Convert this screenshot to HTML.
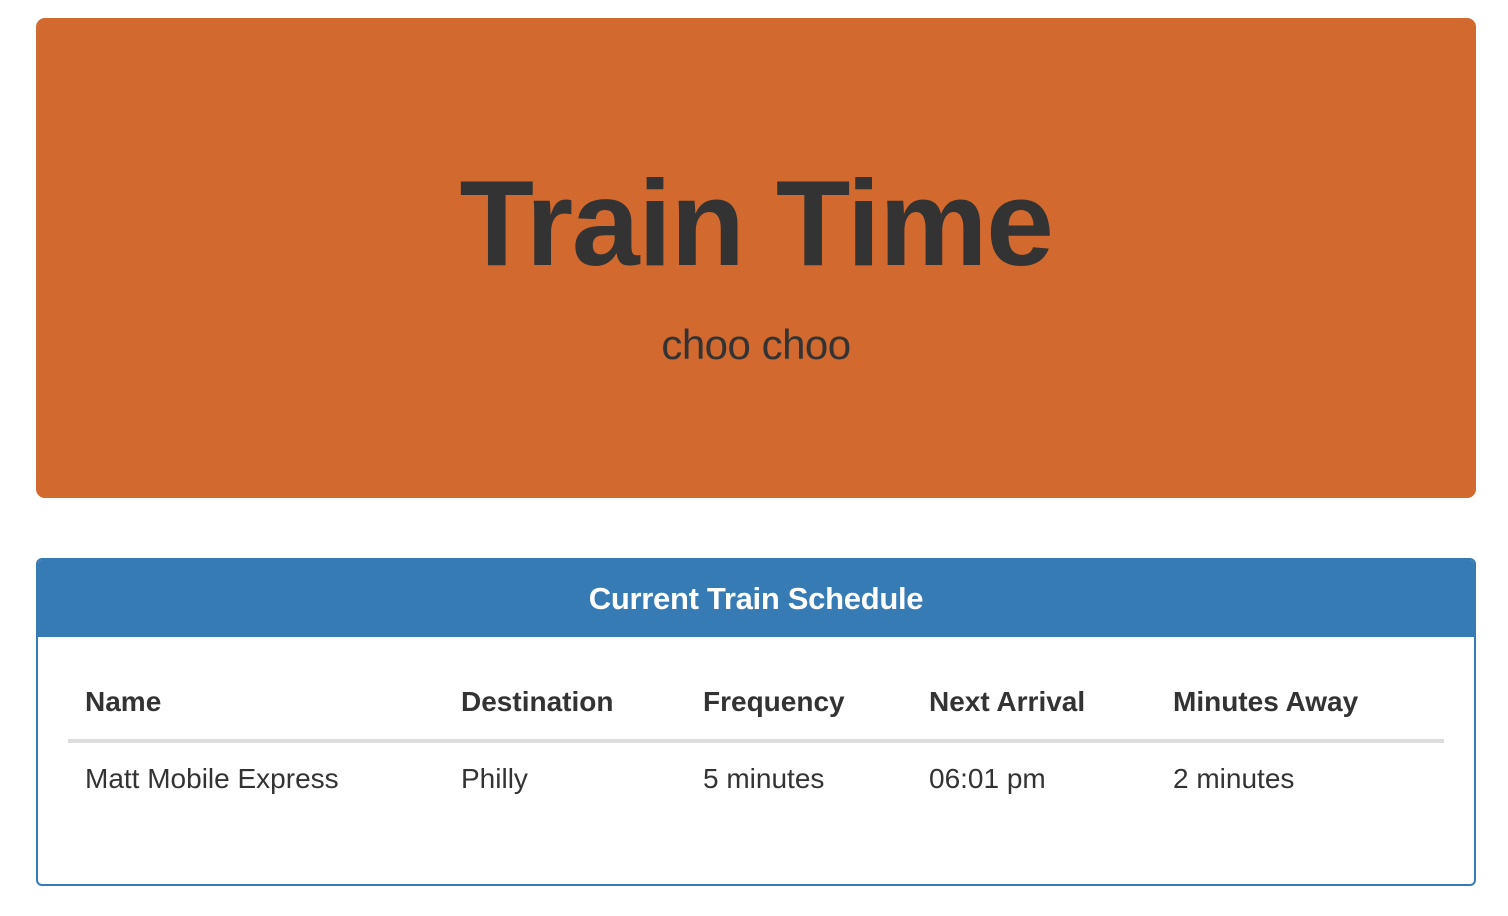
<!DOCTYPE html>
<html><head><meta charset="utf-8"><style>
*{margin:0;padding:0;box-sizing:border-box}
body{width:1508px;height:916px;background:#fff;font-family:"Liberation Sans",Arial,sans-serif;color:#333;position:relative;overflow:hidden}
.jumbo{position:absolute;left:36px;top:18px;width:1440px;height:480px;background:#D2692E;border-radius:9px}
.title{position:absolute;left:0;right:0;top:144px;text-align:center;font-size:122px;font-weight:bold;letter-spacing:-1.5px;color:#333;line-height:1}
.sub{position:absolute;left:0;right:0;top:306px;text-align:center;font-size:42px;font-weight:300;color:#333;line-height:1;letter-spacing:-0.5px}
.panel{position:absolute;left:36px;top:558px;width:1440px;height:328px;border:2px solid #377BB5;border-radius:6px;overflow:hidden}
.ph{height:77px;background:#377BB5;color:#fff;font-weight:bold;font-size:31px;text-align:center;line-height:78px;letter-spacing:-0.3px}
.t{position:absolute;font-size:28px;line-height:1}
.b{font-weight:bold}
.line{position:absolute;left:30px;top:179px;width:1376px;height:4px;background:#ddd}
</style></head><body>
<div class="jumbo"><div class="title">Train Time</div><div class="sub">choo choo</div></div>
<div class="panel"><div class="ph">Current Train Schedule</div>
<div class="t b" style="left:47px;top:128px">Name</div>
<div class="t b" style="left:423px;top:128px">Destination</div>
<div class="t b" style="left:665px;top:128px">Frequency</div>
<div class="t b" style="left:891px;top:128px">Next Arrival</div>
<div class="t b" style="left:1135px;top:128px">Minutes Away</div>
<div class="line"></div>
<div class="t" style="left:47px;top:205px">Matt Mobile Express</div>
<div class="t" style="left:423px;top:205px">Philly</div>
<div class="t" style="left:665px;top:205px">5 minutes</div>
<div class="t" style="left:891px;top:205px">06:01 pm</div>
<div class="t" style="left:1135px;top:205px">2 minutes</div>
</div>
</body></html>
